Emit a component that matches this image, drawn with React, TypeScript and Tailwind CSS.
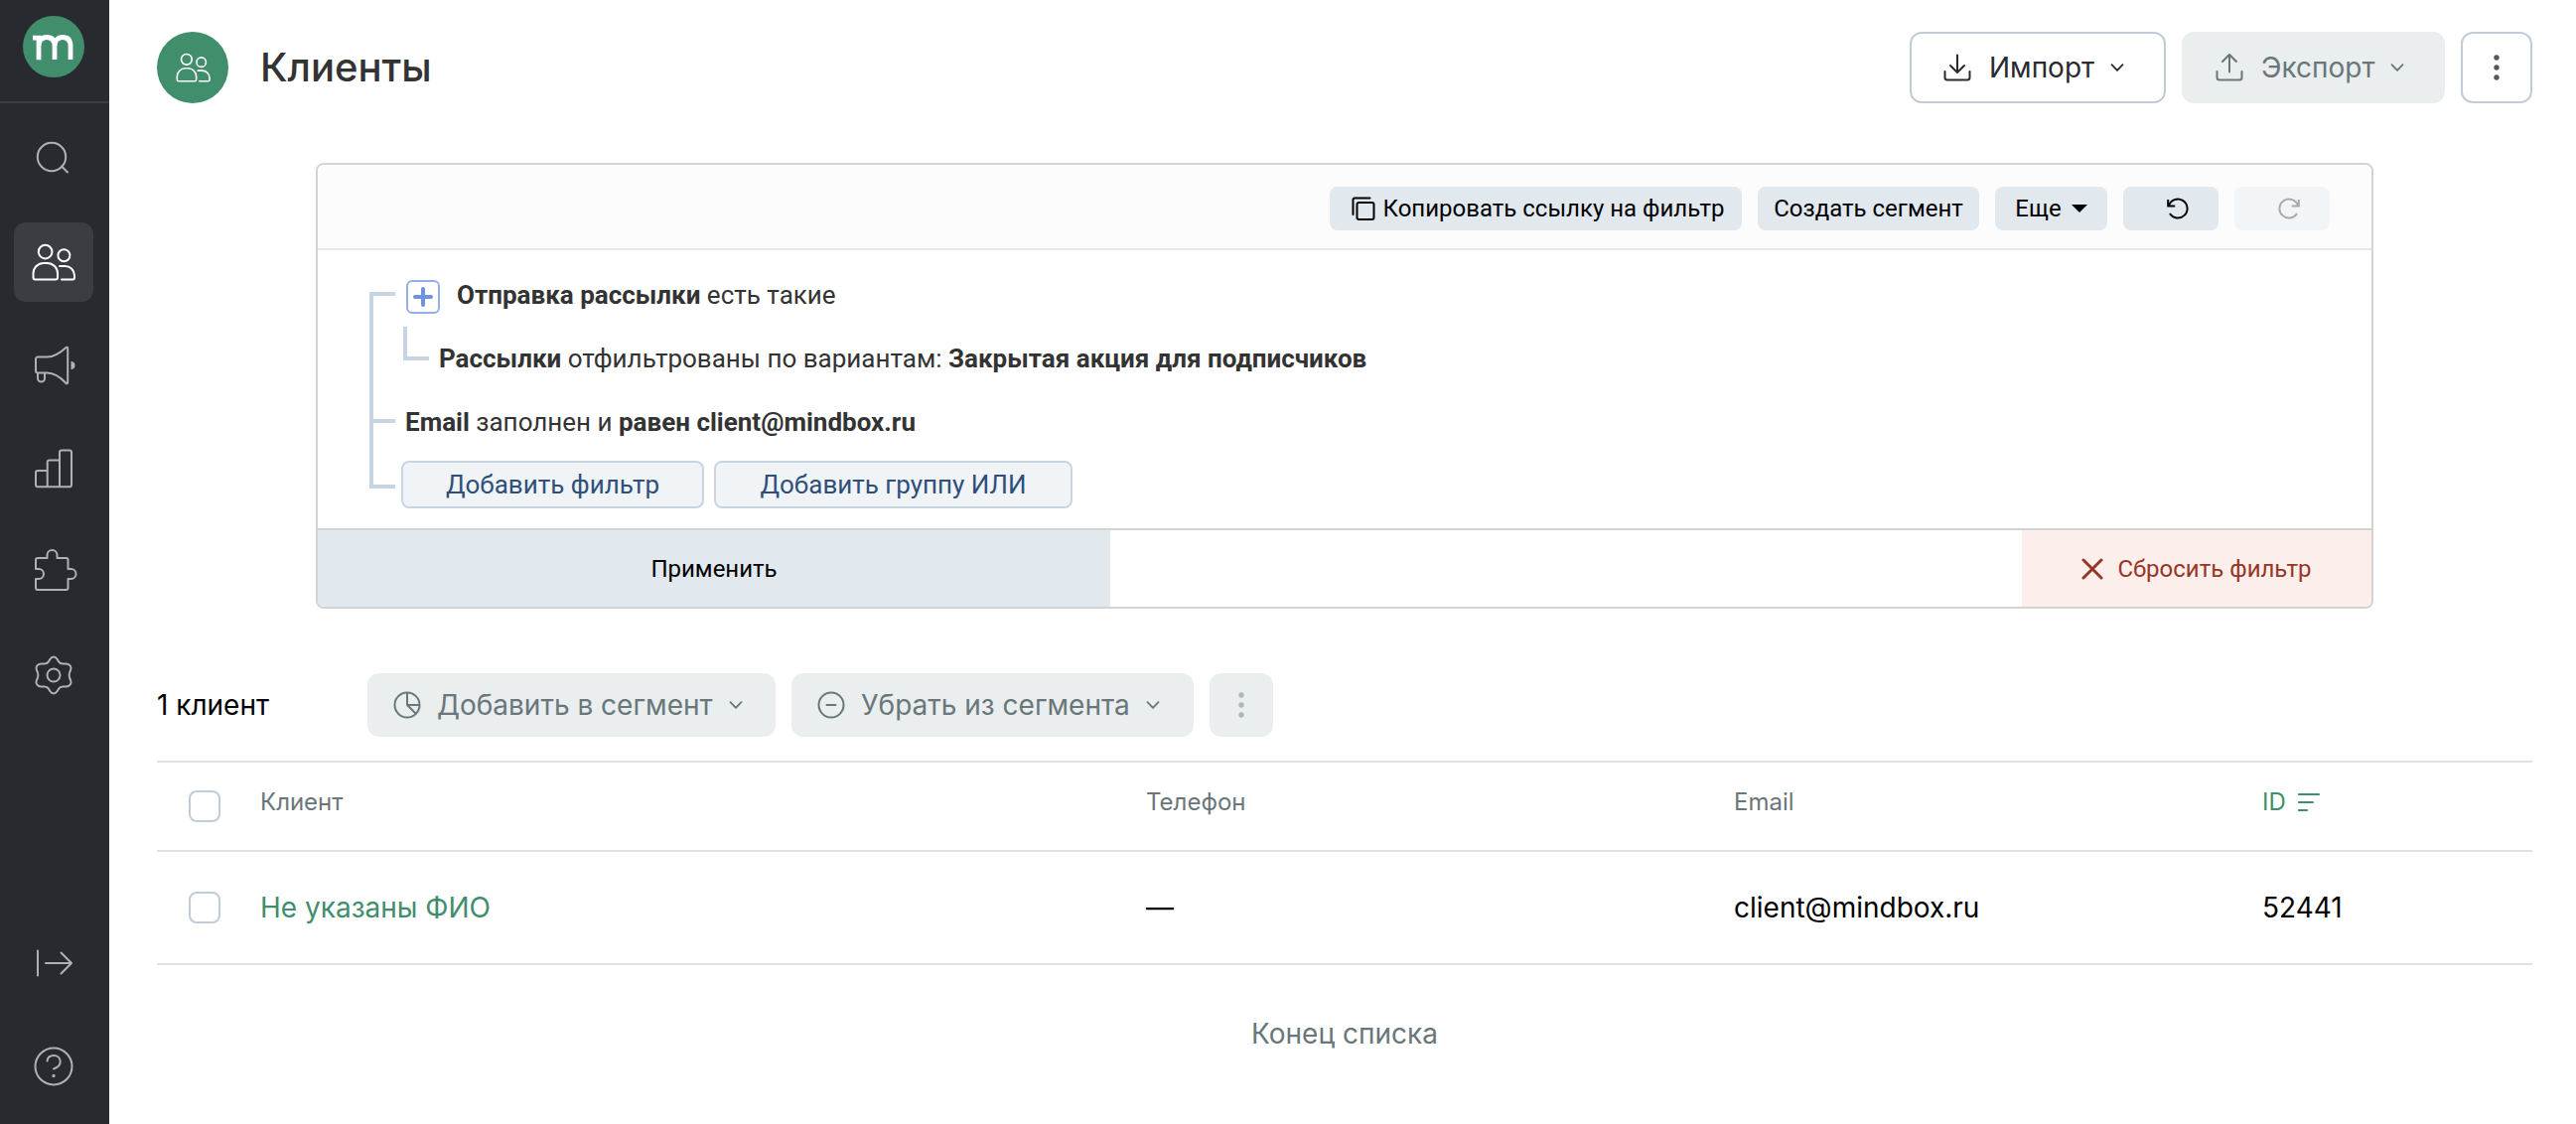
import type { ReactNode } from 'react'

const sans = "font-['Inter','Noto_Sans',sans-serif]"
const humanist = "font-['Roboto','Noto_Sans',sans-serif]"

function UsersIcon({ className }: { className: string }) {
  return (
    <svg viewBox="0 0 44 38" fill="none" stroke="currentColor" strokeWidth="2" strokeLinejoin="round" className={className}>
      <circle cx="13.6" cy="8.6" r="6.8" />
      <circle cx="32.4" cy="12.2" r="6" />
      <path d="M1.5 34.5v-4A10.5 10.5 0 0 1 12 20h3.5A10.5 10.5 0 0 1 26 30.5v4a2 2 0 0 1-2 2H3.5a2 2 0 0 1-2-2z" />
      <path d="M28 23h5.5A9.5 9.5 0 0 1 43 32.5v2a2 2 0 0 1-2 2H30" strokeLinecap="round" />
    </svg>
  )
}

function Icon({ children }: { children: ReactNode }) {
  return (
    <svg viewBox="0 0 44 44" fill="none" stroke="currentColor" strokeWidth="2" strokeLinejoin="round" strokeLinecap="round" className="size-11 overflow-visible">
      {children}
    </svg>
  )
}

function Chevron() {
  return (
    <svg viewBox="0 0 14 8" fill="none" stroke="currentColor" strokeWidth="1.8" strokeLinecap="round" strokeLinejoin="round" className="h-2 w-3.5">
      <path d="M1.5 1.2L7 6.8l5.5-5.6" />
    </svg>
  )
}

function Dots() {
  return (
    <svg viewBox="0 0 6 26" fill="currentColor" className="h-[26px] w-1.5">
      <circle cx="3" cy="3" r="2.7" />
      <circle cx="3" cy="13" r="2.7" />
      <circle cx="3" cy="23" r="2.7" />
    </svg>
  )
}

function NavItem({ label, active, children }: { label: string; active?: boolean; children: ReactNode }) {
  return (
    <a
      href="#"
      aria-label={label}
      className={`flex size-20 items-center justify-center rounded-xl ${active ? 'bg-[#3a3d42] text-white' : 'text-[#b0b1b3]'}`}
    >
      {children}
    </a>
  )
}

function Sidebar() {
  return (
    <aside className="flex w-[110px] shrink-0 flex-col bg-[#292a2f] pb-[18px]">
      <div className="flex h-[104px] border-b-2 border-[#3a3d42] pt-4 pl-[23px]">
        <svg viewBox="0 0 62 62" className="size-[62px]" role="img" aria-label="Mindbox">
          <circle cx="31" cy="31" r="31" fill="#418e6c" />
          <path d="M10 22.2h6v22M16 31c0-6 3-9.5 8-9.5s8 3 8 9V44M32 31c0-6 3-9.5 8-9.5s8 3 8 9V44" fill="none" stroke="#fff" strokeWidth="4.8" />
        </svg>
      </div>
      <nav className="flex grow flex-col gap-6 pt-4 pl-3.5">
        <NavItem label="Поиск">
          <Icon>
            <circle cx="20" cy="20" r="14.2" />
            <path d="M30 29.5l6 6" />
          </Icon>
        </NavItem>
        <NavItem label="Клиенты" active>
          <UsersIcon className="h-[38px] w-11" />
        </NavItem>
        <NavItem label="Рассылки">
          <Icon>
            <path d="M4 15.5a2 2 0 0 1 2-2h9.5C22 13.5 28 10 34.5 4a1 1 0 0 1 1.7.7v34.6a1 1 0 0 1-1.7.7C28.5 33.5 22 29.5 15.5 29.5H6a2 2 0 0 1-2-2z" />
            <path d="M6 30v5a3.5 3.5 0 0 0 7 0v-5" />
            <path d="M39.5 18a4 4 0 0 1 0 8z" fill="currentColor" stroke="none" />
          </Icon>
        </NavItem>
        <NavItem label="Отчеты">
          <Icon>
            <path d="M15.7 40.2V24H6a2 2 0 0 0-2 2v12.2a2 2 0 0 0 2 2h32a2 2 0 0 0 2-2V5.4a2 2 0 0 0-2-2h-8a2 2 0 0 0-2 2v34.8M28 13.6H17.7a2 2 0 0 0-2 2V24" />
          </Icon>
        </NavItem>
        <NavItem label="Интеграции">
          <Icon>
            <path d="M4 19V10a2 2 0 0 1 2-2h9.5V5a5 5 0 0 1 10 0v3H34.5a2 2 0 0 1 2 2v9h3a5 5 0 0 1 0 10h-3v9a2 2 0 0 1-2 2H6a2 2 0 0 1-2-2V29h3a5 5 0 0 0 0-10z" />
          </Icon>
        </NavItem>
        <NavItem label="Настройки">
          <Icon>
            <path d="M18.5 5.7C19.5 4.2 20.6 3.5 22 3.5s2.5.7 3.5 2.2l1.4 2.4c1 1.6 2.6 2.4 4.4 2.4h3.2c4 0 6.3 3.7 4.3 7.2l-.6 1.3c-.8 2-.8 4 0 6l.6 1.3c2 3.5-.3 7.2-4.3 7.2h-3.2c-1.8 0-3.4.8-4.4 2.4l-1.4 2.4c-1 1.5-2.1 2.2-3.5 2.2s-2.5-.7-3.5-2.2l-1.4-2.4c-1-1.6-2.6-2.4-4.4-2.4H9.5c-4 0-6.3-3.7-4.3-7.2l.6-1.3c.8-2 .8-4 0-6l-.6-1.3C3.2 14.2 5.5 10.5 9.5 10.5h3.2c1.8 0 3.4-.8 4.4-2.4z" />
            <circle cx="22" cy="22" r="6.5" />
          </Icon>
        </NavItem>
      </nav>
      <div className="flex flex-col gap-6 pl-3.5">
        <NavItem label="Развернуть меню">
          <Icon>
            <path d="M6 9.5v25M14 22h26M29.5 11.5L40 22 29.5 32.5" />
          </Icon>
        </NavItem>
        <NavItem label="Помощь">
          <Icon>
            <circle cx="22" cy="22" r="18.5" />
            <path d="M15.5 16.5c.5-3.5 3.2-5.5 6.5-5.5 3.8 0 6.7 2.5 6.7 6.2 0 4.2-4 6.3-6.7 7.3" />
            <circle cx="22" cy="31.5" r=".7" fill="currentColor" />
          </Icon>
        </NavItem>
      </div>
    </aside>
  )
}

function PageHeader() {
  return (
    <header className="flex items-center">
      <div className="flex size-[72px] items-center justify-center rounded-full bg-[#418e6c] text-white">
        <UsersIcon className="h-[30px] w-[35px]" />
      </div>
      <h1 className="ml-8 text-[40px] leading-[48px] font-medium text-[#333]">Клиенты</h1>
      <div className="ml-auto flex gap-4 text-[28px]">
        <button className="flex h-[72px] w-[258px] items-center rounded-xl border-2 border-[#c1ccd6] pl-8 text-[#292a2f]">
          <svg viewBox="0 0 28 28" fill="none" stroke="currentColor" strokeWidth="2" strokeLinecap="round" strokeLinejoin="round" className="mr-[18px] size-7">
            <path d="M14 1.5v17M7 12l7 7 7-7M1.5 18v6a2.5 2.5 0 0 0 2.5 2.5h20a2.5 2.5 0 0 0 2.5-2.5v-6" />
          </svg>
          <span className="mr-4">Импорт</span>
          <Chevron />
        </button>
        <button disabled className="flex h-[72px] w-[265px] items-center rounded-xl bg-[#eaeeef] pl-[34px] text-[#69767a]">
          <svg viewBox="0 0 28 28" fill="none" stroke="currentColor" strokeWidth="2" strokeLinecap="round" strokeLinejoin="round" className="mr-[18px] size-7">
            <path d="M14 18.5v-17M7 8l7-7 7 7M1.5 18v6a2.5 2.5 0 0 0 2.5 2.5h20a2.5 2.5 0 0 0 2.5-2.5v-6" />
          </svg>
          <span className="mr-4">Экспорт</span>
          <Chevron />
        </button>
        <button aria-label="Еще действия" className="flex size-[72px] items-center justify-center rounded-xl border-2 border-[#c1ccd6] text-[#55585c]">
          <Dots />
        </button>
      </div>
    </header>
  )
}

function ToolbarButton({ className, disabled, label, children }: { className: string; disabled?: boolean; label?: string; children: ReactNode }) {
  return (
    <button
      disabled={disabled}
      aria-label={label}
      className={`flex h-11 items-center justify-center rounded-lg whitespace-nowrap ${disabled ? 'bg-[#f2f5f7] text-[#aaa]' : 'bg-[#e1e8ee] text-black'} ${className}`}
    >
      {children}
    </button>
  )
}

function FilterPanel() {
  return (
    <section className={`mx-40 mt-[60px] overflow-hidden rounded-lg border-2 border-[#d3d3d3] ${humanist}`}>
      <div className="flex h-[86px] items-center justify-end gap-4 border-b-2 border-[#e1e8ee] bg-[#fcfcfc] pt-1 pr-[42px] text-2xl">
        <ToolbarButton className="w-[415px] gap-2 pl-1">
          <svg viewBox="0 0 24 24" fill="none" stroke="currentColor" strokeWidth="2" strokeLinecap="round" strokeLinejoin="round" className="size-6">
            <rect x="5.5" y="6" width="17" height="17" rx="2" />
            <path d="M1.5 18V3a1.5 1.5 0 0 1 1.5-1.5h15.5" />
          </svg>
          Копировать ссылку на фильтр
        </ToolbarButton>
        <ToolbarButton className="w-[223px]">Создать сегмент</ToolbarButton>
        <ToolbarButton className="w-[113px] gap-2.5">
          Еще
          <svg viewBox="0 0 16 8" fill="currentColor" className="h-2 w-4">
            <path d="M0 0h16L8 8z" />
          </svg>
        </ToolbarButton>
        <ToolbarButton label="Отменить" className="w-24 pl-3.5">
          <svg viewBox="0 0 24 24" fill="none" stroke="currentColor" strokeWidth="2" className="size-6">
            <path d="M2.2 3v6.5h7M3 9.2A9.5 9.5 0 1 1 4 17" />
          </svg>
        </ToolbarButton>
        <ToolbarButton label="Повторить" disabled className="w-24 pl-3.5">
          <svg viewBox="0 0 24 24" fill="none" stroke="currentColor" strokeWidth="2" className="size-6">
            <path d="M21.8 3v6.5h-7M21 9.2A9.5 9.5 0 1 0 20 17" />
          </svg>
        </ToolbarButton>
      </div>

      <div className="flex pt-[13px] pb-5 pl-[52px] text-[26px] leading-9 text-[#333]">
        <div className="mt-[29px] mb-5 flex w-[26px] flex-col border-l-4 border-[#c7d4e2]">
          <div className="h-[132px] border-y-4 border-[#c7d4e2]" />
          <div className="grow border-b-4 border-[#c7d4e2]" />
        </div>
        <div className="pl-1.5">
          <div className="flex h-16 items-center pl-[5px]">
            <button aria-label="Добавить условие" className="mt-1 flex size-[34px] items-center justify-center rounded-md border-2 border-[#94afe6] text-[#6f93dc]">
              <svg viewBox="0 0 20 20" fill="none" stroke="currentColor" strokeWidth="4" strokeLinecap="round" className="size-5">
                <path d="M10 2v16M2 10h16" />
              </svg>
            </button>
            <p className="ml-[17px]"><b>Отправка рассылки</b> есть такие</p>
          </div>
          <div className="flex h-16 items-center pl-0.5">
            <div className="h-[34px] w-[26px] self-start border-b-4 border-l-4 border-[#c7d4e2]" />
            <p className="ml-2.5">
              <b>Рассылки</b> отфильтрованы по вариантам: <b>Закрытая акция для подписчиков</b>
            </p>
          </div>
          <div className="flex h-16 items-center pl-1">
            <p><b>Email</b> заполнен и <b>равен client@mindbox.ru</b></p>
          </div>
          <div className="mt-[7px] flex gap-2.5 text-[#2f4f7a]">
            <button className="h-12 w-[305px] rounded-lg border-2 border-[#c9d6e2] bg-[#f1f4f7]">Добавить фильтр</button>
            <button className="h-12 w-[361px] rounded-lg border-2 border-[#c9d6e2] bg-[#f1f4f7]">Добавить группу ИЛИ</button>
          </div>
        </div>
      </div>

      <div className="flex h-[79px] justify-between border-t-2 border-[#d3d3d3] text-2xl">
        <button className="w-[798px] bg-[#e1e8ee] text-black">Применить</button>
        <button className="flex w-[352px] items-center justify-center gap-3.5 bg-[#fceeeb] text-[#963627]">
          <svg viewBox="0 0 22 22" fill="none" stroke="currentColor" strokeWidth="3" strokeLinecap="round" className="size-[22px]">
            <path d="M2 2l18 18M20 2L2 20" />
          </svg>
          Сбросить фильтр
        </button>
      </div>
    </section>
  )
}

function ListActions() {
  return (
    <div className="mt-[65px] flex items-center text-[28px]">
      <p className="w-[212px] text-black">1 клиент</p>
      <div className="flex gap-4 text-[#69767a]">
        <button disabled className="flex h-16 w-[411px] items-center rounded-xl bg-[#eaeeef] pl-[26px]">
          <svg viewBox="0 0 28 28" fill="none" stroke="currentColor" strokeWidth="2" strokeLinejoin="round" className="mr-4 size-7">
            <circle cx="14" cy="14" r="12.5" />
            <path d="M14 1.5V14h12.5M14 14l8.8 8.8" />
          </svg>
          <span className="mr-4">Добавить в сегмент</span>
          <Chevron />
        </button>
        <button disabled className="flex h-16 w-[405px] items-center rounded-xl bg-[#eaeeef] pl-[26px]">
          <svg viewBox="0 0 28 28" fill="none" stroke="currentColor" strokeWidth="2" strokeLinecap="round" className="mr-4 size-7">
            <circle cx="14" cy="14" r="12.5" />
            <path d="M9.5 14h9" />
          </svg>
          <span className="mr-4">Убрать из сегмента</span>
          <Chevron />
        </button>
        <button disabled aria-label="Еще действия" className="flex size-16 items-center justify-center rounded-xl bg-[#eaeeef] text-[#afb6b9]">
          <Dots />
        </button>
      </div>
    </div>
  )
}

function Checkbox({ label }: { label: string }) {
  return <input type="checkbox" aria-label={label} className="block size-8 appearance-none rounded-lg border-2 border-[#c1ccd6] bg-white" />
}

function ClientsTable() {
  return (
    <table className="mt-6 w-full table-fixed border-y-2 border-[#dce3e6] text-left text-[28px] text-black">
      <colgroup>
        <col className="w-[104px]" />
        <col />
        <col className="w-[592px]" />
        <col className="w-[532px]" />
        <col className="w-[272px]" />
      </colgroup>
      <thead>
        <tr className="h-[90px] border-b-2 border-[#dce3e6] text-2xl text-[#69767a]">
          <th className="pl-8"><Checkbox label="Выбрать всех" /></th>
          <th className="pb-2 font-normal">Клиент</th>
          <th className="pb-2 font-normal">Телефон</th>
          <th className="pb-2 font-normal">Email</th>
          <th className="pb-2 font-normal text-[#418e6c]">
            <button className="flex items-center gap-3">
              ID
              <svg viewBox="0 0 22 20" fill="none" stroke="currentColor" strokeWidth="2.2" strokeLinecap="round" className="h-5 w-[22px]">
                <path d="M1 2h20M1 10h14M1 18h8" />
              </svg>
            </button>
          </th>
        </tr>
      </thead>
      <tbody>
        <tr className="h-[114px]">
          <td className="pl-8"><Checkbox label="Выбрать клиента" /></td>
          <td><a href="#" className="text-[#418e6c]">Не указаны ФИО</a></td>
          <td>—</td>
          <td>client@mindbox.ru</td>
          <td>52441</td>
        </tr>
      </tbody>
    </table>
  )
}

export default function App() {
  return (
    <div className={`flex min-h-screen bg-white ${sans}`}>
      <Sidebar />
      <main className="min-w-0 grow pt-8 pr-11 pl-12">
        <PageHeader />
        <FilterPanel />
        <ListActions />
        <ClientsTable />
        <p className="mt-12 text-center text-[28px] text-[#69767a]">Конец списка</p>
      </main>
    </div>
  )
}
